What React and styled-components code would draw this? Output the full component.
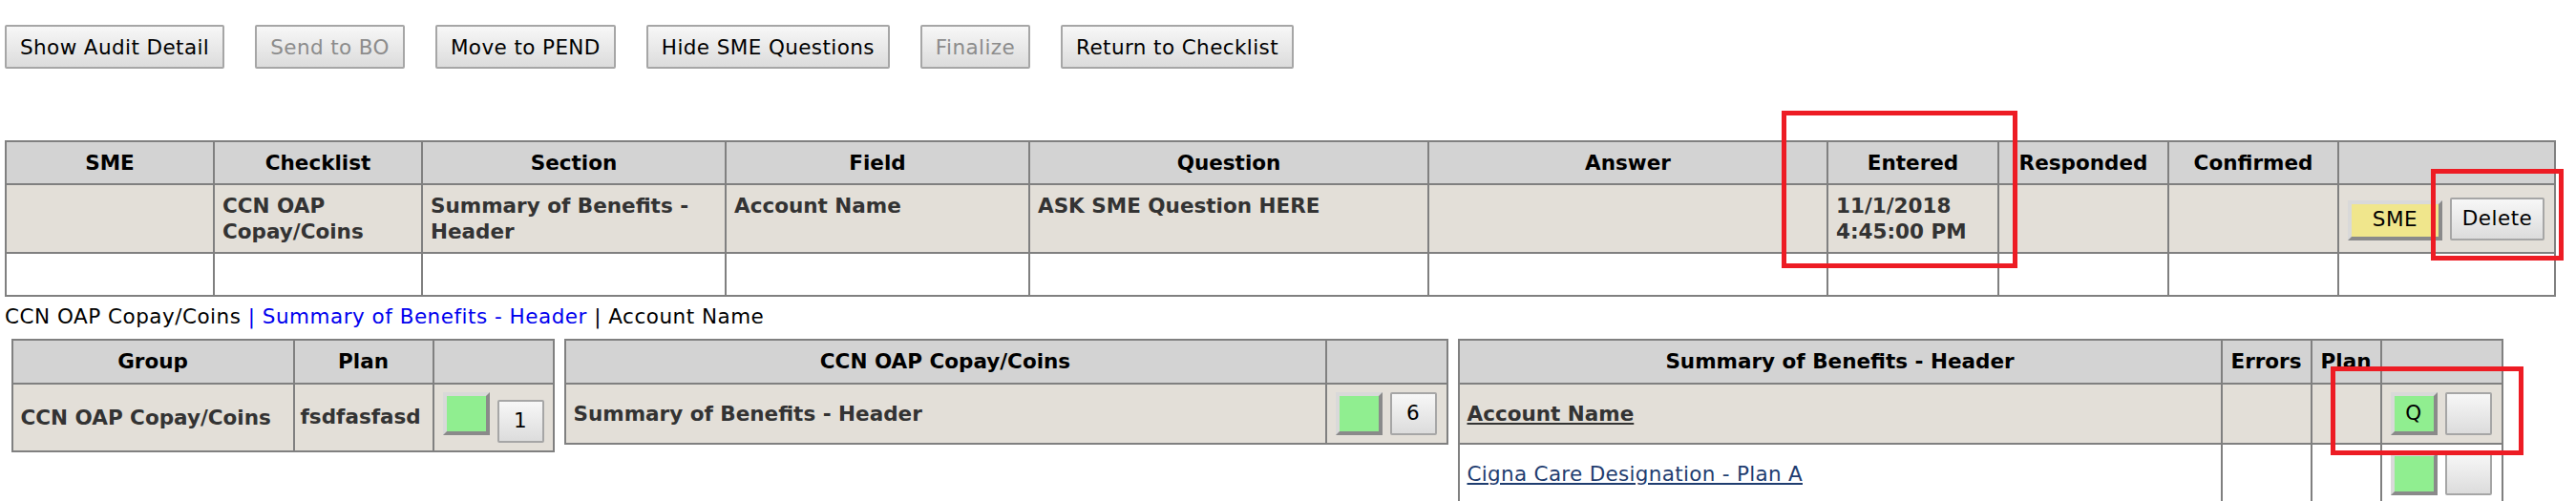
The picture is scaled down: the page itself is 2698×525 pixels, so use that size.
import React from "react";
import styled, { createGlobalStyle } from "styled-components";

const GlobalStyle = createGlobalStyle`
  html, body { margin: 0; padding: 0; background: #fff; }
  body {
    font-family: "DejaVu Sans", Verdana, sans-serif;
    font-size: 21.5px;
    letter-spacing: 0.5px;
    color: #000;
    overflow: hidden;
  }
`;

const Page = styled.div`
  position: relative;
  width: 2698px;
  height: 525px;
  padding: 26px 0 0 5px;
  box-sizing: border-box;
  overflow: hidden;
`;

const Toolbar = styled.div`
  display: flex;
  gap: 32px;
`;

const ToolButton = styled.button`
  height: 46px;
  padding: 0 14px;
  font: inherit;
  letter-spacing: 0.4px;
  color: ${(p) => (p.$muted ? "#8c8c8c" : "#000")};
  background: linear-gradient(#f7f7f7, #dcdcdc);
  border: 2px solid #a6a6a6;
  border-radius: 2px;
`;

const Grid = styled.table`
  border-collapse: collapse;
  table-layout: fixed;
  width: ${(p) => p.$w}px;
  margin-top: ${(p) => p.$mt || 0}px;
  border: 2px solid #808080;
  color: #333;
`;

const Col = styled.col`
  width: ${(p) => p.$w}px;
`;

const Th = styled.th`
  background: #d3d3d3;
  border: 2px solid #808080;
  color: #000;
  font-weight: bold;
  letter-spacing: 0;
  text-align: center;
  padding: 8px 6px;
  line-height: ${(p) => p.$lh || 27}px;
  white-space: nowrap;
`;

const Td = styled.td`
  background: ${(p) => p.$bg || "#fff"};
  border: 2px solid #808080;
  padding: ${(p) => p.$pad || "9px 8px 8px"};
  line-height: 26.7px;
  font-weight: ${(p) => (p.$bold ? "bold" : "normal")};
  letter-spacing: ${(p) => (p.$bold ? "0" : "0.5px")};
  vertical-align: ${(p) => p.$va || "top"};
  height: ${(p) => (p.$h ? `${p.$h}px` : "auto")};
  white-space: ${(p) => (p.$nowrap ? "nowrap" : "normal")};
`;

const BtnRow = styled.div`
  display: flex;
  align-items: ${(p) => p.$align || "flex-start"};
  gap: 8px;
`;

const Bevel = styled.button`
  width: ${(p) => p.$w || 49}px;
  height: ${(p) => p.$h || 45}px;
  box-sizing: border-box;
  padding: 0;
  font: inherit;
  font-weight: normal;
  letter-spacing: 0.5px;
  color: #000;
  background: ${(p) => p.$bg};
  border-style: solid;
  border-width: 4px;
  border-color: #d9d9d9 #8a8a8a #8a8a8a #d9d9d9;
`;

const GrayBtn = styled.button`
  width: ${(p) => p.$w || 49}px;
  height: 45px;
  margin-top: ${(p) => p.$mt || 0}px;
  box-sizing: border-box;
  padding: 0;
  font: inherit;
  font-weight: normal;
  letter-spacing: 0.5px;
  color: #000;
  background: linear-gradient(#f7f7f7, #dcdcdc);
  border: 2px solid #a6a6a6;
  border-radius: 2px;
`;

const Crumbs = styled.div`
  margin-top: 8px;
  line-height: 26.7px;
`;

const CrumbLink = styled.a`
  color: #0000ee;
  text-decoration: none;
`;

const Lower = styled.div`
  display: flex;
  align-items: flex-start;
  gap: 10px;
  margin: 9px 0 0 6.5px;
`;

const RowLink = styled.a`
  color: ${(p) => p.$color || "#333"};
  font-weight: ${(p) => (p.$bold ? "bold" : "normal")};
  letter-spacing: ${(p) => (p.$bold ? "0" : "0.3px")};
  text-decoration: underline;
`;

const Mark = styled.div`
  position: absolute;
  left: ${(p) => p.$x}px;
  top: ${(p) => p.$y}px;
  width: ${(p) => p.$w}px;
  height: ${(p) => p.$h}px;
  box-sizing: border-box;
  border: 5px solid #ed1c24;
  pointer-events: none;
`;

const BEIGE = "#e3dfd8";
const GREEN = "#90ee90";
const KHAKI = "#f0e68c";

const mainCols = [218, 218, 318, 318, 418, 418, 179, 178, 178, 227];
const mainHeads = ["SME", "Checklist", "Section", "Field", "Question", "Answer", "Entered", "Responded", "Confirmed", ""];

export default function App() {
  return (
    <>
      <GlobalStyle />
      <Page>
        <Toolbar>
          <ToolButton>Show Audit Detail</ToolButton>
          <ToolButton $muted>Send to BO</ToolButton>
          <ToolButton>Move to PEND</ToolButton>
          <ToolButton>Hide SME Questions</ToolButton>
          <ToolButton $muted>Finalize</ToolButton>
          <ToolButton>Return to Checklist</ToolButton>
        </Toolbar>

        <Grid $w={2672} $mt={75}>
          <colgroup>
            {mainCols.map((w, i) => (
              <Col key={i} $w={w} />
            ))}
          </colgroup>
          <thead>
            <tr>
              {mainHeads.map((h, i) => (
                <Th key={i}>{h}</Th>
              ))}
            </tr>
          </thead>
          <tbody>
            <tr>
              <Td $bg={BEIGE} />
              <Td $bg={BEIGE} $bold>CCN OAP Copay/Coins</Td>
              <Td $bg={BEIGE} $bold>Summary of Benefits - Header</Td>
              <Td $bg={BEIGE} $bold>Account Name</Td>
              <Td $bg={BEIGE} $bold>ASK SME Question HERE</Td>
              <Td $bg={BEIGE} />
              <Td $bg={BEIGE} $bold>11/1/2018 4:45:00 PM</Td>
              <Td $bg={BEIGE} />
              <Td $bg={BEIGE} />
              <Td $bg={BEIGE} $va="middle" $pad="0 6px 0 9px">
                <BtnRow $align="flex-end">
                  <Bevel $bg={KHAKI} $w={99} $h={42}>SME</Bevel>
                  <GrayBtn $w={99}>Delete</GrayBtn>
                </BtnRow>
              </Td>
            </tr>
            <tr>
              {mainCols.map((_, i) => (
                <Td key={i} $h={43} $pad="0" />
              ))}
            </tr>
          </tbody>
        </Grid>

        <Crumbs>
          CCN OAP Copay/Coins <CrumbLink href="#">| Summary of Benefits - Header</CrumbLink> | Account Name
        </Crumbs>

        <Lower>
          <Grid $w={567}>
            <colgroup>
              <Col $w={295} />
              <Col $w={146} />
              <Col $w={126} />
            </colgroup>
            <thead>
              <tr>
                <Th $lh={28}>Group</Th>
                <Th $lh={28}>Plan</Th>
                <Th $lh={28} />
              </tr>
            </thead>
            <tbody>
              <tr>
                <Td $bg={BEIGE} $bold $va="middle" $nowrap>CCN OAP Copay/Coins</Td>
                <Td $bg={BEIGE} $bold $va="middle" $pad="8px 6px" $nowrap>fsdfasfasd</Td>
                <Td $bg={BEIGE} $va="middle" $pad="8px 6px 8px 9px">
                  <BtnRow>
                    <Bevel $bg={GREEN} />
                    <GrayBtn $mt={8}>1</GrayBtn>
                  </BtnRow>
                </Td>
              </tr>
            </tbody>
          </Grid>

          <Grid $w={924}>
            <colgroup>
              <Col $w={797} />
              <Col $w={127} />
            </colgroup>
            <thead>
              <tr>
                <Th $lh={28}>CCN OAP Copay/Coins</Th>
                <Th $lh={28} />
              </tr>
            </thead>
            <tbody>
              <tr>
                <Td $bg={BEIGE} $bold $va="middle">Summary of Benefits - Header</Td>
                <Td $bg={BEIGE} $va="middle" $pad="8px 6px 8px 9px">
                  <BtnRow>
                    <Bevel $bg={GREEN} />
                    <GrayBtn>6</GrayBtn>
                  </BtnRow>
                </Td>
              </tr>
            </tbody>
          </Grid>

          <Grid $w={1093}>
            <colgroup>
              <Col $w={799} />
              <Col $w={94} />
              <Col $w={73} />
              <Col $w={127} />
            </colgroup>
            <thead>
              <tr>
                <Th $lh={28}>Summary of Benefits - Header</Th>
                <Th $lh={28}>Errors</Th>
                <Th $lh={28}>Plan</Th>
                <Th $lh={28} />
              </tr>
            </thead>
            <tbody>
              <tr>
                <Td $bg={BEIGE} $va="middle">
                  <RowLink href="#" $bold>Account Name</RowLink>
                </Td>
                <Td $bg={BEIGE} />
                <Td $bg={BEIGE} />
                <Td $bg={BEIGE} $va="middle" $pad="8px 6px 8px 9px">
                  <BtnRow>
                    <Bevel $bg={GREEN}>Q</Bevel>
                    <GrayBtn />
                  </BtnRow>
                </Td>
              </tr>
              <tr>
                <Td $va="middle">
                  <RowLink href="#" $color="#1f3d70">Cigna Care Designation - Plan A</RowLink>
                </Td>
                <Td />
                <Td />
                <Td $va="middle" $pad="8px 6px 8px 9px">
                  <BtnRow>
                    <Bevel $bg={GREEN} />
                    <GrayBtn />
                  </BtnRow>
                </Td>
              </tr>
            </tbody>
          </Grid>
        </Lower>

        <Mark $x={1866} $y={116} $w={247} $h={165} />
        <Mark $x={2546} $y={177} $w={139} $h={96} />
        <Mark $x={2441} $y={384} $w={202} $h={93} />
      </Page>
    </>
  );
}
